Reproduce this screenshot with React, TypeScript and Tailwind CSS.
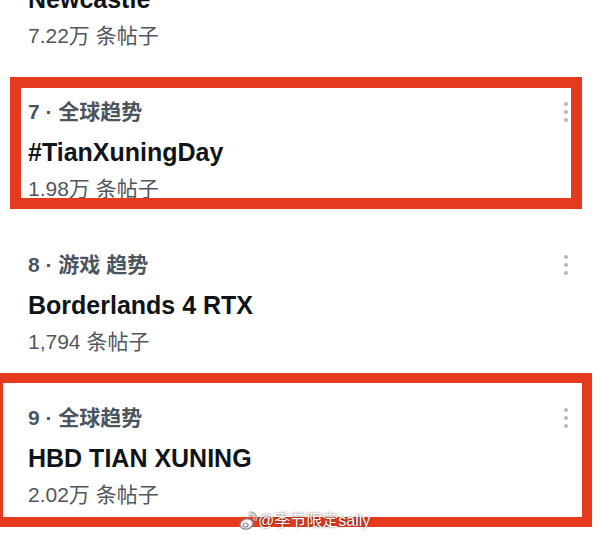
import React from "react";

const FONT = {
  fontFamily:
    '"Liberation Sans", Arial, "Noto Sans CJK SC", "Noto Sans", sans-serif',
};

function Dots() {
  return (
    <div className="flex flex-col items-center gap-[4px]">
      <span className="block w-[4px] h-[4px] rounded-full bg-[#b4b8bc]" />
      <span className="block w-[4px] h-[4px] rounded-full bg-[#b4b8bc]" />
      <span className="block w-[4px] h-[4px] rounded-full bg-[#b4b8bc]" />
    </div>
  );
}

function Trend({
  rank,
  cat,
  title,
  count,
}: {
  rank: string;
  cat: string;
  title: string;
  count: string;
}) {
  return (
    <div className="h-[153px] pl-[28px] pr-[32px] pt-[24px]">
      <div className="flex items-center justify-between h-[24px]">
        <span className="text-[21px] leading-[24px] font-bold text-[#4b5560]">
          {rank} · {cat}
        </span>
        <Dots />
      </div>
      <div className="mt-[13px] text-[25px] leading-[30px] font-bold text-[#0f1419]">
        {title}
      </div>
      <div className="mt-[9px] text-[21px] leading-[26px] text-[#50575e]">
        {count}
      </div>
    </div>
  );
}

function WeiboLogo() {
  return (
    <svg width="18" height="20" viewBox="0 0 18 20">
      <ellipse
        cx="7.5"
        cy="13"
        rx="6.5"
        ry="5"
        transform="rotate(-15 7.5 13)"
        fill="#ffffff"
        stroke="#8a8a8a"
        strokeWidth="1.4"
      />
      <ellipse cx="6.5" cy="14" rx="2.6" ry="2" fill="#ffffff" stroke="#8a8a8a" strokeWidth="1.2" />
      <path d="M10 4.5 C13 4 15.5 6 15 9" fill="none" stroke="#8a8a8a" strokeWidth="1.6" strokeLinecap="round" />
      <path d="M10.5 1.5 C15 0.8 18.5 4.5 17 9.5" fill="none" stroke="#8a8a8a" strokeWidth="1.6" strokeLinecap="round" />
      <path d="M10 4.5 C13 4 15.5 6 15 9" fill="none" stroke="#ffffff" strokeWidth="0.6" strokeLinecap="round" />
      <path d="M10.5 1.5 C15 0.8 18.5 4.5 17 9.5" fill="none" stroke="#ffffff" strokeWidth="0.6" strokeLinecap="round" />
    </svg>
  );
}

export default function App() {
  return (
    <div
      className="relative w-[600px] h-[541px] overflow-hidden bg-white"
      style={FONT}
    >
      <div className="flex flex-col">
        <div className="h-[76px] pl-[28px] pr-[32px]">
          <div className="-mt-[16px] text-[25px] leading-[30px] font-bold text-[#0f1419]">
            Newcastle
          </div>
          <div className="mt-[9px] text-[21px] leading-[26px] text-[#50575e]">
            7.22万 条帖子
          </div>
        </div>
        <Trend rank="7" cat="全球趋势" title="#TianXuningDay" count="1.98万 条帖子" />
        <Trend rank="8" cat="游戏 趋势" title="Borderlands 4 RTX" count="1,794 条帖子" />
        <Trend rank="9" cat="全球趋势" title="HBD TIAN XUNING" count="2.02万 条帖子" />
      </div>

      {/* red annotation boxes */}
      <div className="absolute left-[10px] top-[77px] w-[572px] h-[132px] border-[11px] border-[#e63a1f]" />
      <div className="absolute left-[-7px] top-[373px] w-[599px] h-[154px] border-[10px] border-[#e63a1f]" />

      {/* watermark */}
      <div className="absolute left-[239px] top-[511px] flex items-end gap-[1px]">
        <WeiboLogo />
        <span className="text-[16px] leading-[20px] text-white [text-shadow:0_0_2px_rgba(0,0,0,0.7)]">
          @季节限定sally
        </span>
      </div>
    </div>
  );
}
